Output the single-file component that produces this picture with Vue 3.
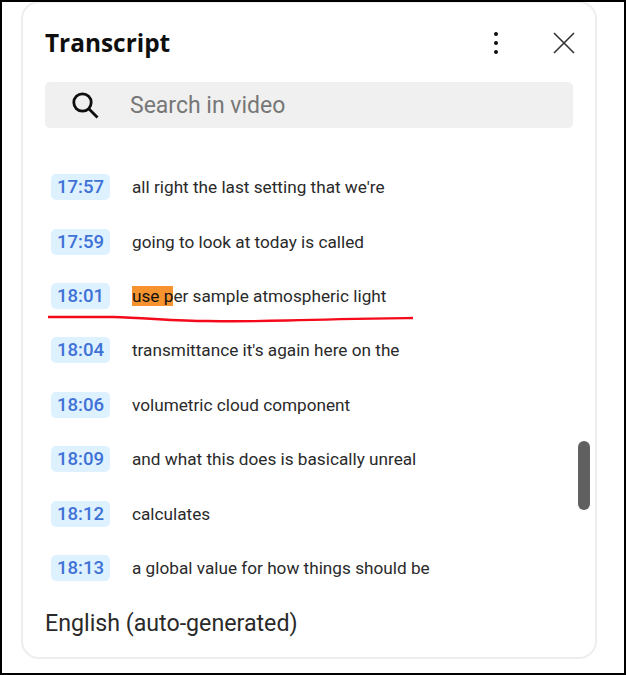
<template>
  <div class="frame">
    <div class="panel">
      <div class="head">
        <h2 class="title">Transcript</h2>
        <button class="icon-btn more" aria-label="More">
          <svg width="6" height="24" viewBox="0 0 6 24">
            <circle cx="3" cy="3" r="2" />
            <circle cx="3" cy="12" r="2" />
            <circle cx="3" cy="21" r="2" />
          </svg>
        </button>
        <button class="icon-btn close" aria-label="Close">
          <svg width="24" height="24" viewBox="0 0 24 24">
            <path d="M2 2 L22 22 M22 2 L2 22" />
          </svg>
        </button>
      </div>

      <div class="search">
        <svg class="search-icon" width="30" height="30" viewBox="0 0 30 30">
          <circle cx="12.5" cy="12.5" r="8.7" />
          <path d="M18.8 18.8 L27.5 27.5" />
        </svg>
        <span class="placeholder">Search in video</span>
      </div>

      <ul class="lines">
        <li v-for="line in lines" :key="line.time" class="line">
          <span class="stamp">{{ line.time }}</span>
          <span class="text" v-if="line.mark"><mark>{{ line.mark }}</mark>{{ line.text }}</span>
          <span class="text" v-else>{{ line.text }}</span>
        </li>
      </ul>

      <div class="thumb"></div>
      <div class="lang">English (auto-generated)</div>
    </div>

    <svg class="scribble" width="368" height="10" viewBox="0 0 368 10">
      <path d="M1 2 L66 2 C100 3 130 6 160 6 C190 6.5 220 6 240 5.5 C290 4 330 3.5 366 3" />
    </svg>
  </div>
</template>

<script setup>
const lines = [
  { time: "17:57", text: "all right the last setting that we're" },
  { time: "17:59", text: "going to look at today is called" },
  { time: "18:01", mark: "use p", text: "er sample atmospheric light" },
  { time: "18:04", text: "transmittance it's again here on the" },
  { time: "18:06", text: "volumetric cloud component" },
  { time: "18:09", text: "and what this does is basically unreal" },
  { time: "18:12", text: "calculates" },
  { time: "18:13", text: "a global value for how things should be" },
];
</script>

<style>
html,
body {
  margin: 0;
  background: #fff;
}
</style>

<style scoped>
.frame {
  position: relative;
  width: 626px;
  height: 675px;
  box-sizing: border-box;
  border: 2px solid #000;
  background: #fff;
  font-family: Roboto, "Liberation Sans", sans-serif;
  overflow: hidden;
}

.panel {
  position: relative;
  width: 576px;
  height: 658px;
  margin: -1px 0 0 19px;
  box-sizing: border-box;
  border: 2px solid #eeeeee;
  border-radius: 18px;
  padding: 0 22px;
  display: flex;
  flex-direction: column;
}

.head {
  height: 79px;
  display: flex;
  align-items: center;
  flex-shrink: 0;
}

.title {
  margin: 0 auto 0 0;
  font-family: "Open Sans", sans-serif;
  font-size: 24.4px;
  font-weight: 700;
  color: #0f0f0f;
}

.icon-btn {
  border: none;
  background: transparent;
  padding: 0;
  display: flex;
}

.more {
  margin-right: 53px;
}

.more svg {
  fill: #0f0f0f;
}

.close {
  margin-right: -3px;
}

.close svg {
  fill: none;
  stroke: #333;
  stroke-width: 1.6;
}

.search {
  height: 46px;
  flex-shrink: 0;
  background: #f0f0f0;
  border-radius: 5px;
  display: flex;
  align-items: center;
  padding-left: 25px;
}

.search-icon {
  fill: none;
  stroke: #0f0f0f;
  stroke-width: 2.8;
  margin-right: 30px;
}

.placeholder {
  font-size: 23px;
  color: #777;
}

.lines {
  list-style: none;
  margin: 32px 0 0;
  padding: 0 0 0 6px;
}

.line {
  height: 54.4px;
  display: flex;
  align-items: center;
}

.stamp {
  width: 59px;
  height: 26px;
  line-height: 26px;
  text-align: center;
  background: #def1ff;
  border-radius: 5px;
  color: #3f72d6;
  font-size: 18.6px;
  font-weight: 500;
  margin-right: 22px;
}

.text {
  font-size: 17.2px;
  color: #2a2a2a;
}

mark {
  background: #f7932f;
  color: #111;
}

.thumb {
  position: absolute;
  left: 555px;
  top: 438px;
  width: 12px;
  height: 69px;
  border-radius: 6px;
  background: #606060;
}

.lang {
  position: absolute;
  left: 22px;
  top: 606px;
  font-size: 23.2px;
  color: #2a2a2a;
}

.scribble {
  position: absolute;
  left: 45px;
  top: 313px;
}

.scribble path {
  fill: none;
  stroke: #f40a1a;
  stroke-width: 2.4;
}
</style>
